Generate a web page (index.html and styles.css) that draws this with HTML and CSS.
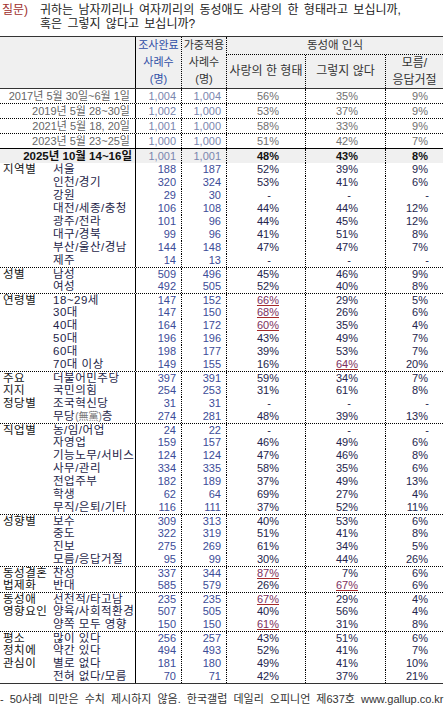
FILE: index.html
```html
<!DOCTYPE html>
<html lang="ko">
<head>
<meta charset="utf-8">
<link rel="stylesheet" href="styles.css">
</head>
<body>
<div class="page">
  <div class="question">
    <span class="qlabel">질문)</span>
    <div class="qtext">
      <div class="qline">귀하는 남자끼리나 여자끼리의 동성애도 사랑의 한 형태라고 보십니까,</div>
      <div class="qline">혹은 그렇지 않다고 보십니까?</div>
    </div>
  </div>

  <div class="table">
    <div class="head">
      <div class="h-blank"></div>
      <div class="h-n1"><span>조사완료</span><span>사례수</span><span>(명)</span></div>
      <div class="h-n2"><span>가중적용</span><span>사례수</span><span>(명)</span></div>
      <div class="h-group">동성애 인식</div>
      <div class="h-p1">사랑의 한 형태</div>
      <div class="h-p2">그렇지 않다</div>
      <div class="h-p3"><span>모름/</span><span>응답거절</span></div>
    </div>

    <div class="row hist first"><span class="lab">2017년 5월 30일~6월 1일</span><span class="n1">1,004</span><span class="n2">1,004</span><span class="p1">56%</span><span class="p2">35%</span><span class="p3">9%</span></div>
    <div class="row hist"><span class="lab">2019년 5월 28~30일</span><span class="n1">1,002</span><span class="n2">1,000</span><span class="p1">53%</span><span class="p2">37%</span><span class="p3">9%</span></div>
    <div class="row hist"><span class="lab">2021년 5월 18, 20일</span><span class="n1">1,001</span><span class="n2">1,000</span><span class="p1">58%</span><span class="p2">33%</span><span class="p3">9%</span></div>
    <div class="row hist"><span class="lab">2023년 5월 23~25일</span><span class="n1">1,000</span><span class="n2">1,000</span><span class="p1">51%</span><span class="p2">42%</span><span class="p3">7%</span></div>
    <div class="row total"><span class="lab">2025년 10월 14~16일</span><span class="n1">1,001</span><span class="n2">1,001</span><span class="p1">48%</span><span class="p2">43%</span><span class="p3">8%</span></div>

    <div class="row"><span class="g">지역별</span><span class="s">서울</span><span class="n1">188</span><span class="n2">187</span><span class="p1">52%</span><span class="p2">39%</span><span class="p3">9%</span></div>
    <div class="row"><span class="g"></span><span class="s">인천/경기</span><span class="n1">320</span><span class="n2">324</span><span class="p1">53%</span><span class="p2">41%</span><span class="p3">6%</span></div>
    <div class="row"><span class="g"></span><span class="s">강원</span><span class="n1">29</span><span class="n2">30</span><span class="p1 d">-</span><span class="p2 d">-</span><span class="p3 d">-</span></div>
    <div class="row"><span class="g"></span><span class="s">대전/세종/충청</span><span class="n1">106</span><span class="n2">108</span><span class="p1">44%</span><span class="p2">44%</span><span class="p3">12%</span></div>
    <div class="row"><span class="g"></span><span class="s">광주/전라</span><span class="n1">101</span><span class="n2">96</span><span class="p1">44%</span><span class="p2">45%</span><span class="p3">12%</span></div>
    <div class="row"><span class="g"></span><span class="s">대구/경북</span><span class="n1">99</span><span class="n2">96</span><span class="p1">41%</span><span class="p2">51%</span><span class="p3">8%</span></div>
    <div class="row"><span class="g"></span><span class="s">부산/울산/경남</span><span class="n1">144</span><span class="n2">148</span><span class="p1">47%</span><span class="p2">47%</span><span class="p3">7%</span></div>
    <div class="row"><span class="g"></span><span class="s">제주</span><span class="n1">14</span><span class="n2">13</span><span class="p1 d">-</span><span class="p2 d">-</span><span class="p3 d">-</span></div>

    <div class="row sep"><span class="g">성별</span><span class="s">남성</span><span class="n1">509</span><span class="n2">496</span><span class="p1">45%</span><span class="p2">46%</span><span class="p3">9%</span></div>
    <div class="row"><span class="g"></span><span class="s">여성</span><span class="n1">492</span><span class="n2">505</span><span class="p1">52%</span><span class="p2">40%</span><span class="p3">8%</span></div>

    <div class="row sep"><span class="g">연령별</span><span class="s">18~29세</span><span class="n1">147</span><span class="n2">152</span><span class="p1"><u class="hi">66%</u></span><span class="p2">29%</span><span class="p3">5%</span></div>
    <div class="row"><span class="g"></span><span class="s">30대</span><span class="n1">147</span><span class="n2">150</span><span class="p1"><u class="hi">68%</u></span><span class="p2">26%</span><span class="p3">6%</span></div>
    <div class="row"><span class="g"></span><span class="s">40대</span><span class="n1">164</span><span class="n2">172</span><span class="p1"><u class="hi">60%</u></span><span class="p2">35%</span><span class="p3">4%</span></div>
    <div class="row"><span class="g"></span><span class="s">50대</span><span class="n1">196</span><span class="n2">196</span><span class="p1">43%</span><span class="p2">49%</span><span class="p3">7%</span></div>
    <div class="row"><span class="g"></span><span class="s">60대</span><span class="n1">198</span><span class="n2">177</span><span class="p1">39%</span><span class="p2">53%</span><span class="p3">7%</span></div>
    <div class="row"><span class="g"></span><span class="s">70대 이상</span><span class="n1">149</span><span class="n2">155</span><span class="p1">16%</span><span class="p2"><u class="hi">64%</u></span><span class="p3">20%</span></div>

    <div class="row sep"><span class="g">주요</span><span class="s">더불어민주당</span><span class="n1">397</span><span class="n2">391</span><span class="p1">59%</span><span class="p2">34%</span><span class="p3">7%</span></div>
    <div class="row"><span class="g">지지</span><span class="s">국민의힘</span><span class="n1">254</span><span class="n2">253</span><span class="p1">31%</span><span class="p2">61%</span><span class="p3">8%</span></div>
    <div class="row"><span class="g">정당별</span><span class="s">조국혁신당</span><span class="n1">31</span><span class="n2">31</span><span class="p1 d">-</span><span class="p2 d">-</span><span class="p3 d">-</span></div>
    <div class="row"><span class="g"></span><span class="s">무당<span class="han">(無黨)</span>층</span><span class="n1">274</span><span class="n2">281</span><span class="p1">48%</span><span class="p2">39%</span><span class="p3">13%</span></div>

    <div class="row sep"><span class="g">직업별</span><span class="s">농/임/어업</span><span class="n1">24</span><span class="n2">22</span><span class="p1 d">-</span><span class="p2 d">-</span><span class="p3 d">-</span></div>
    <div class="row"><span class="g"></span><span class="s">자영업</span><span class="n1">159</span><span class="n2">157</span><span class="p1">46%</span><span class="p2">49%</span><span class="p3">6%</span></div>
    <div class="row"><span class="g"></span><span class="s">기능노무/서비스</span><span class="n1">124</span><span class="n2">124</span><span class="p1">47%</span><span class="p2">46%</span><span class="p3">8%</span></div>
    <div class="row"><span class="g"></span><span class="s">사무/관리</span><span class="n1">334</span><span class="n2">335</span><span class="p1">58%</span><span class="p2">35%</span><span class="p3">6%</span></div>
    <div class="row"><span class="g"></span><span class="s">전업주부</span><span class="n1">182</span><span class="n2">189</span><span class="p1">37%</span><span class="p2">49%</span><span class="p3">13%</span></div>
    <div class="row"><span class="g"></span><span class="s">학생</span><span class="n1">62</span><span class="n2">64</span><span class="p1">69%</span><span class="p2">27%</span><span class="p3">4%</span></div>
    <div class="row"><span class="g"></span><span class="s">무직/은퇴/기타</span><span class="n1">116</span><span class="n2">111</span><span class="p1">37%</span><span class="p2">52%</span><span class="p3">11%</span></div>

    <div class="row sep"><span class="g">성향별</span><span class="s">보수</span><span class="n1">309</span><span class="n2">313</span><span class="p1">40%</span><span class="p2">53%</span><span class="p3">6%</span></div>
    <div class="row"><span class="g"></span><span class="s">중도</span><span class="n1">322</span><span class="n2">319</span><span class="p1">51%</span><span class="p2">41%</span><span class="p3">8%</span></div>
    <div class="row"><span class="g"></span><span class="s">진보</span><span class="n1">275</span><span class="n2">269</span><span class="p1">61%</span><span class="p2">34%</span><span class="p3">5%</span></div>
    <div class="row"><span class="g"></span><span class="s">모름/응답거절</span><span class="n1">95</span><span class="n2">99</span><span class="p1">30%</span><span class="p2">44%</span><span class="p3">26%</span></div>

    <div class="row sep"><span class="g">동성결혼</span><span class="s">찬성</span><span class="n1">337</span><span class="n2">344</span><span class="p1"><u class="hi">87%</u></span><span class="p2">7%</span><span class="p3">6%</span></div>
    <div class="row"><span class="g">법제화</span><span class="s">반대</span><span class="n1">585</span><span class="n2">579</span><span class="p1">26%</span><span class="p2"><u class="hi">67%</u></span><span class="p3">6%</span></div>

    <div class="row sep"><span class="g">동성애</span><span class="s">선천적/타고남</span><span class="n1">235</span><span class="n2">235</span><span class="p1"><u class="hi">67%</u></span><span class="p2">29%</span><span class="p3">4%</span></div>
    <div class="row"><span class="g">영향요인</span><span class="s">양육/사회적환경</span><span class="n1">507</span><span class="n2">505</span><span class="p1">40%</span><span class="p2">56%</span><span class="p3">4%</span></div>
    <div class="row"><span class="g"></span><span class="s">양쪽 모두 영향</span><span class="n1">150</span><span class="n2">150</span><span class="p1"><u class="hi">61%</u></span><span class="p2">31%</span><span class="p3">8%</span></div>

    <div class="row sep"><span class="g">평소</span><span class="s">많이 있다</span><span class="n1">256</span><span class="n2">257</span><span class="p1">43%</span><span class="p2">51%</span><span class="p3">6%</span></div>
    <div class="row"><span class="g">정치에</span><span class="s">약간 있다</span><span class="n1">494</span><span class="n2">493</span><span class="p1">52%</span><span class="p2">41%</span><span class="p3">7%</span></div>
    <div class="row"><span class="g">관심이</span><span class="s">별로 없다</span><span class="n1">181</span><span class="n2">180</span><span class="p1">49%</span><span class="p2">41%</span><span class="p3">10%</span></div>
    <div class="row last"><span class="g"></span><span class="s">전혀 없다/모름</span><span class="n1">70</span><span class="n2">71</span><span class="p1">42%</span><span class="p2">37%</span><span class="p3">21%</span></div>
  </div>

  <div class="footer">- 50사례 미만은 수치 제시하지 않음. 한국갤럽 데일리 오피니언 제637호 www.gallup.co.kr</div>
</div>
</body>
</html>
```

FILE: styles.css
```css
html, body {
  margin: 0;
  padding: 0;
  background: #ffffff;
}

.page {
  width: 445px;
  font-family: "Liberation Sans Narrow", "Liberation Sans", "Noto Sans CJK KR", sans-serif;
  font-size: 11px;
  color: #222;
}

/* question */
.question {
  display: flex;
  height: 36px;
  padding-top: 3px;
  box-sizing: border-box;
  line-height: 14px;
  font-family: "Liberation Sans", "Noto Sans CJK KR", sans-serif;
  font-size: 12px;
  word-spacing: 2px;
}
.qlabel {
  width: 40px;
  padding-left: 2px;
  box-sizing: border-box;
  color: #a0302e;
}
.qtext {
  display: flex;
  flex-direction: column;
  color: #222;
}
.qline {
  height: 14px;
  white-space: nowrap;
}

/* table */
.table {
  width: 443px;
  border-top: 1px solid #333;
  border-bottom: 1px solid #333;
}

.head {
  display: grid;
  grid-template-columns: 53px 82px 46px 45px 79px 80px 58px;
  grid-template-rows: 18px 33px;
  background: #f0f0f0;
  border-bottom: 1px solid #333;
  color: #333;
  text-align: center;
  font-size: 11.5px;
}
.h-blank { grid-column: 1 / 3; grid-row: 1 / 3; }
.h-n1, .h-n2 {
  grid-row: 1 / 3;
  display: flex;
  flex-direction: column;
  line-height: 17px;
  font-size: 11px;
}
.h-n1 { grid-column: 3; border-left: 1px solid #000; color: #2f4ea6; }
.h-n2 { grid-column: 4; border-left: 1px dotted #000; }
.h-group {
  grid-column: 5 / 8;
  grid-row: 1;
  border-left: 1px dotted #000;
  border-bottom: 1px dotted #000;
  line-height: 17px;
}
.h-p1, .h-p2, .h-p3 {
  grid-row: 2;
  border-left: 1px dotted #000;
  display: flex;
  flex-direction: column;
  justify-content: center;
  line-height: 17px;
  font-size: 12px;
}
.h-p1 { grid-column: 5; }
.h-p2 { grid-column: 6; }
.h-p3 { grid-column: 7; }

/* rows */
.row {
  display: grid;
  grid-template-columns: 53px 82px 46px 45px 79px 80px 58px;
  height: 13px;
  line-height: 13px;
  box-sizing: border-box;
  white-space: nowrap;
}
.row.sep { border-top: 1px dotted #000; line-height: 12px; }

.g { padding-left: 3px; color: #111; font-size: 11.5px; letter-spacing: 0.5px; }
.s { color: #1e1e48; font-size: 11.5px; letter-spacing: 0.5px; }
.han { color: #777; font-size: 10px; letter-spacing: 0; }

.n1, .n2, .p1, .p2, .p3 { text-align: right; }
.n1 { border-left: 1px solid #000; padding-right: 5px; color: #3c4c98; }
.n2 { border-left: 1px dotted #000; padding-right: 5px; color: #3c4c98; }
.p1 { border-left: 1px dotted #000; padding-right: 26px; color: #24244c; }
.p2 { border-left: 1px dotted #000; padding-right: 27px; color: #24244c; }
.p3 { border-left: 1px dotted #000; padding-right: 15px; color: #24244c; }
.p1.d, .p2.d { padding-right: 34px; }
.p3.d { padding-right: 14px; }

.hi {
  color: #7c2f5e;
  text-decoration: underline;
  text-decoration-color: #a52a2a;
  text-underline-offset: 1px;
}

/* historic rows */
.row.hist {
  height: 15px;
  line-height: 14px;
  border-top: 1px dotted #000;
}
.row.hist.first { height: 14px; border-top: none; }
.row.hist .lab, .row.total .lab {
  grid-column: 1 / 3;
  text-align: right;
  padding-right: 5px;
}
.row.hist .lab { color: #666; }
.row.hist .n1, .row.hist .n2 { color: #7a86ae; }
.row.hist .p1, .row.hist .p2, .row.hist .p3 { color: #707070; }

.row.total {
  height: 15px;
  line-height: 14px;
  border-top: 1px solid #000;
  background: #f0f0f0;
}
.row.total .lab { font-weight: bold; color: #111; padding-right: 3px; font-size: 11.5px; }
.row.total .n1, .row.total .n2 { color: #7a86ae; }
.row.total .p1, .row.total .p2, .row.total .p3 { font-weight: bold; color: #111; }

/* footer */
.footer {
  padding: 8px 0 0 0;
  line-height: 14px;
  font-size: 11px;
  word-spacing: 3px;
  color: #333;
  white-space: nowrap;
}
```
